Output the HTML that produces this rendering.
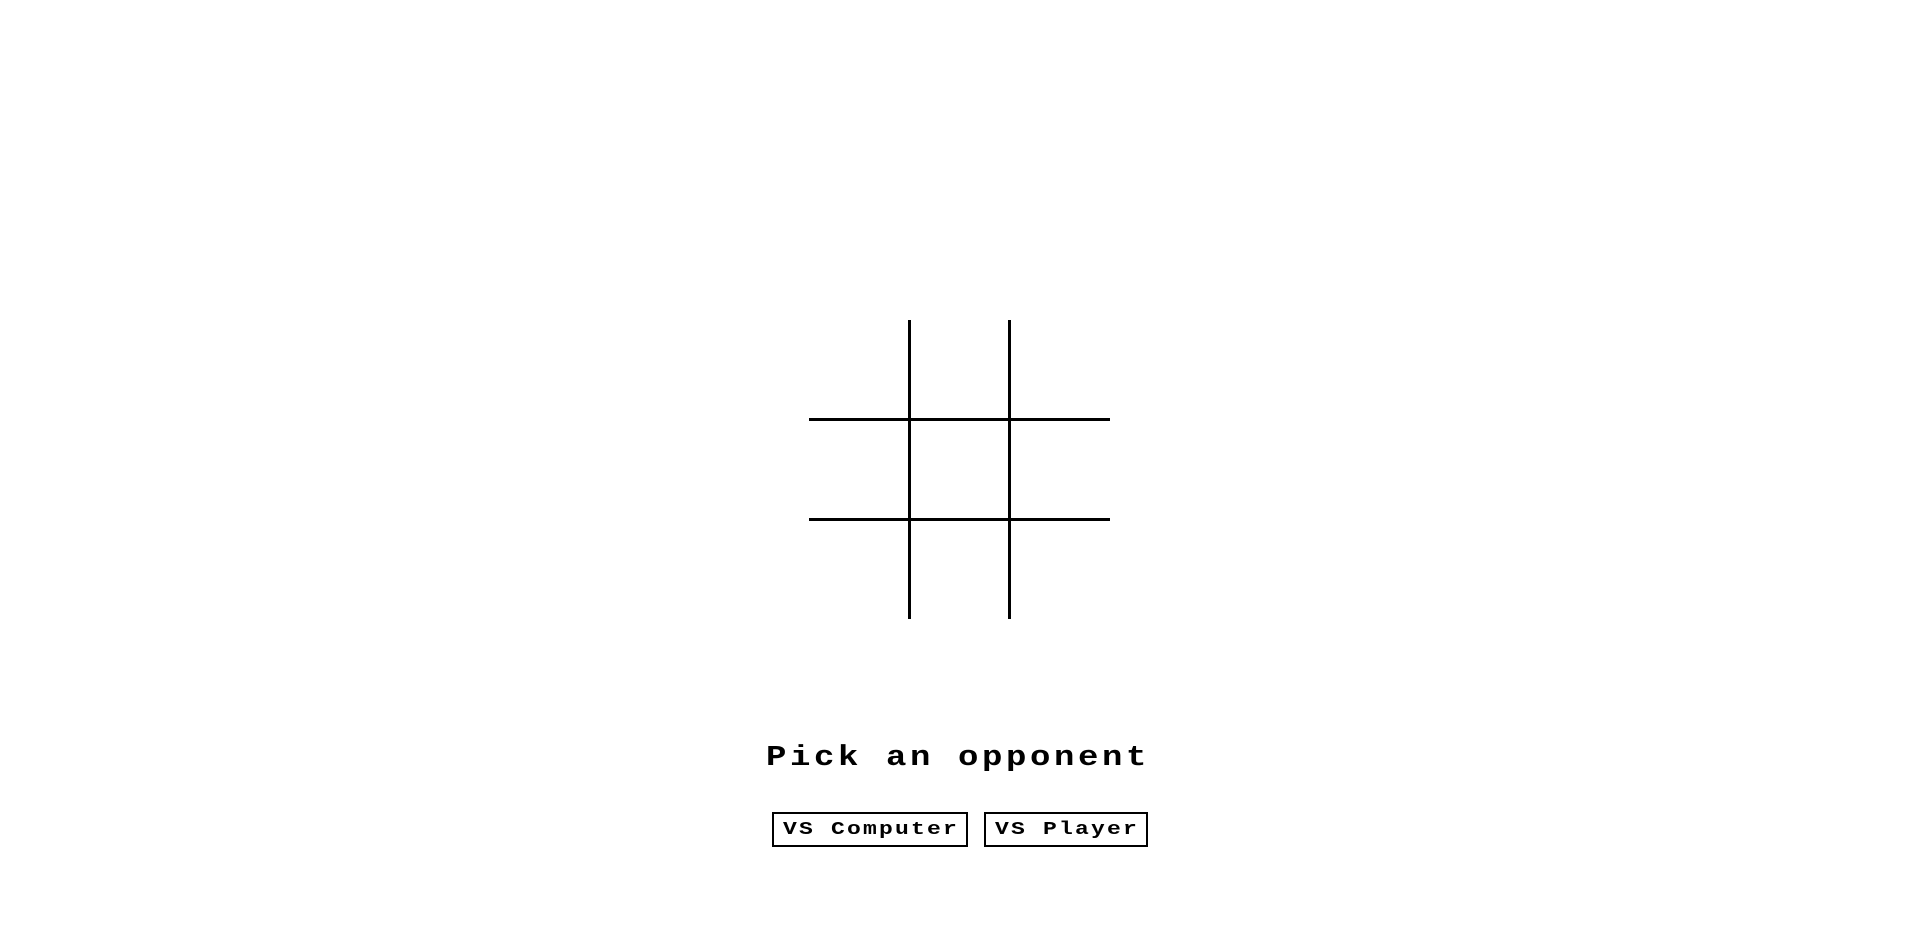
<!DOCTYPE html>
<html><head><style>
body{margin:0;width:1920px;height:942px;background:#fff;position:relative;overflow:hidden;font-family:"Liberation Mono",monospace;font-weight:bold;color:#000}
.l{position:absolute;background:#000}
.t{position:absolute;left:766px;top:740px;font-size:34px;letter-spacing:3.6px;white-space:nowrap;line-height:36px;transform:scaleY(0.85);transform-origin:0 50%}
.b{position:absolute;top:812px;height:31px;border:2px solid #000;box-sizing:content-box;white-space:nowrap;padding-left:9px}
.b span{display:inline-block;font-size:23px;letter-spacing:2.2px;line-height:31px;transform:scaleY(0.8)}
</style></head><body>
<div class="l" style="left:908px;top:320px;width:3px;height:299px"></div>
<div class="l" style="left:1008px;top:320px;width:3px;height:299px"></div>
<div class="l" style="left:809px;top:418px;width:301px;height:3px"></div>
<div class="l" style="left:809px;top:518px;width:301px;height:3px"></div>
<div class="t">Pick an opponent</div>
<div class="b" style="left:772px;width:183px"><span>VS Computer</span></div>
<div class="b" style="left:984px;width:151px"><span>VS Player</span></div>
</body></html>
